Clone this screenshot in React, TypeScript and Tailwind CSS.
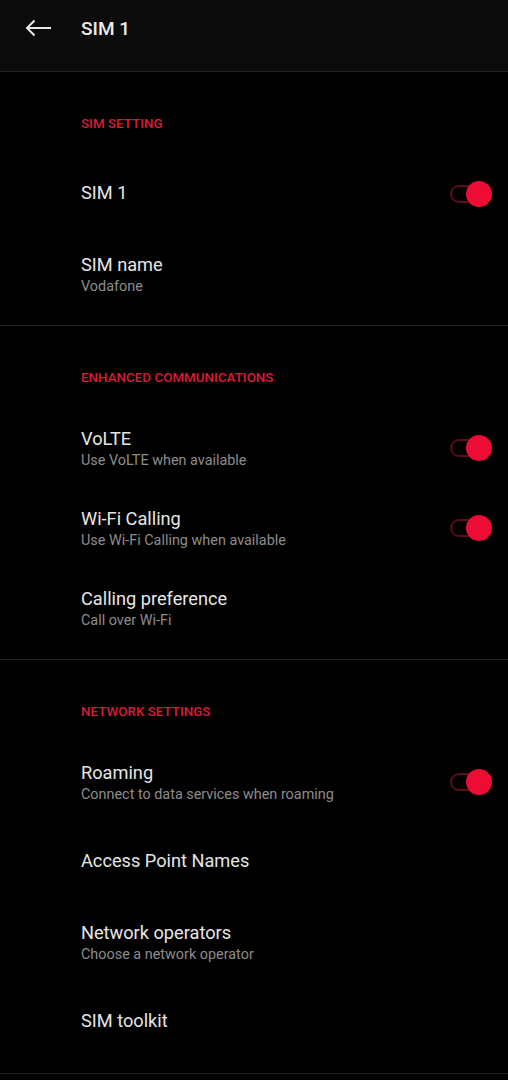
import React from "react";

type Item = { title: string; sub?: string; toggle?: boolean };
type Section = { header: string; items: Item[] };

const sections: Section[] = [
  {
    header: "SIM SETTING",
    items: [
      { title: "SIM 1", toggle: true },
      { title: "SIM name", sub: "Vodafone" },
    ],
  },
  {
    header: "ENHANCED COMMUNICATIONS",
    items: [
      { title: "VoLTE", sub: "Use VoLTE when available", toggle: true },
      { title: "Wi-Fi Calling", sub: "Use Wi-Fi Calling when available", toggle: true },
      { title: "Calling preference", sub: "Call over Wi-Fi" },
    ],
  },
  {
    header: "NETWORK SETTINGS",
    items: [
      { title: "Roaming", sub: "Connect to data services when roaming", toggle: true },
      { title: "Access Point Names" },
      { title: "Network operators", sub: "Choose a network operator" },
      { title: "SIM toolkit" },
    ],
  },
];

function Toggle() {
  return (
    <div className="relative w-[42px] h-[26px] flex items-center">
      <div className="absolute left-0 top-[4px] w-[30px] h-[18px] rounded-full border-2 border-[#5c0c1a]" />
      <div className="absolute right-0 top-0 w-[26px] h-[26px] rounded-full bg-[#ec0c34]" />
    </div>
  );
}

export default function App() {
  return (
    <div
      className="w-[508px] min-h-[1080px] bg-black text-[#e8e8e8]"
      style={{ fontFamily: "Roboto, 'Noto Sans', sans-serif" }}
    >
      <div className="h-[72px] bg-[#0b0b0b] border-b border-[#222222] flex items-center">
        <div className="w-[81px] flex pl-[25px] pb-[15px]">
          <svg width="27" height="18" viewBox="0 0 27 18" fill="none">
            <path d="M26 9H2M9.5 1.5L2 9l7.5 7.5" stroke="#e6e6e6" strokeWidth="2" strokeLinecap="butt" />
          </svg>
        </div>
        <div className="text-[19px] leading-[24px] font-medium text-[#ececec] pb-[14px]">SIM 1</div>
      </div>
      {sections.map((s) => (
        <div key={s.header} className="border-b border-[#222222] pt-[42px] pb-[11px]">
          <div className="pl-[81px] h-[20px] leading-[20px] text-[13.4px] font-medium text-[#dc1a3a] mb-[20px]">
            {s.header}
          </div>
          {s.items.map((it) => (
            <div key={it.title} className="h-[80px] flex items-center pl-[81px] pr-[16px]">
              <div className={it.sub ? "flex-1 flex flex-col pt-[3px]" : "flex-1 flex flex-col pb-[2px]"}>
                <div className="text-[18.2px] leading-[22px] text-[#e6e6e6]">{it.title}</div>
                {it.sub && (
                  <div className="text-[14.4px] leading-[22px] text-[#8c8c8c]">{it.sub}</div>
                )}
              </div>
              {it.toggle && <Toggle />}
            </div>
          ))}
        </div>
      ))}
    </div>
  );
}
